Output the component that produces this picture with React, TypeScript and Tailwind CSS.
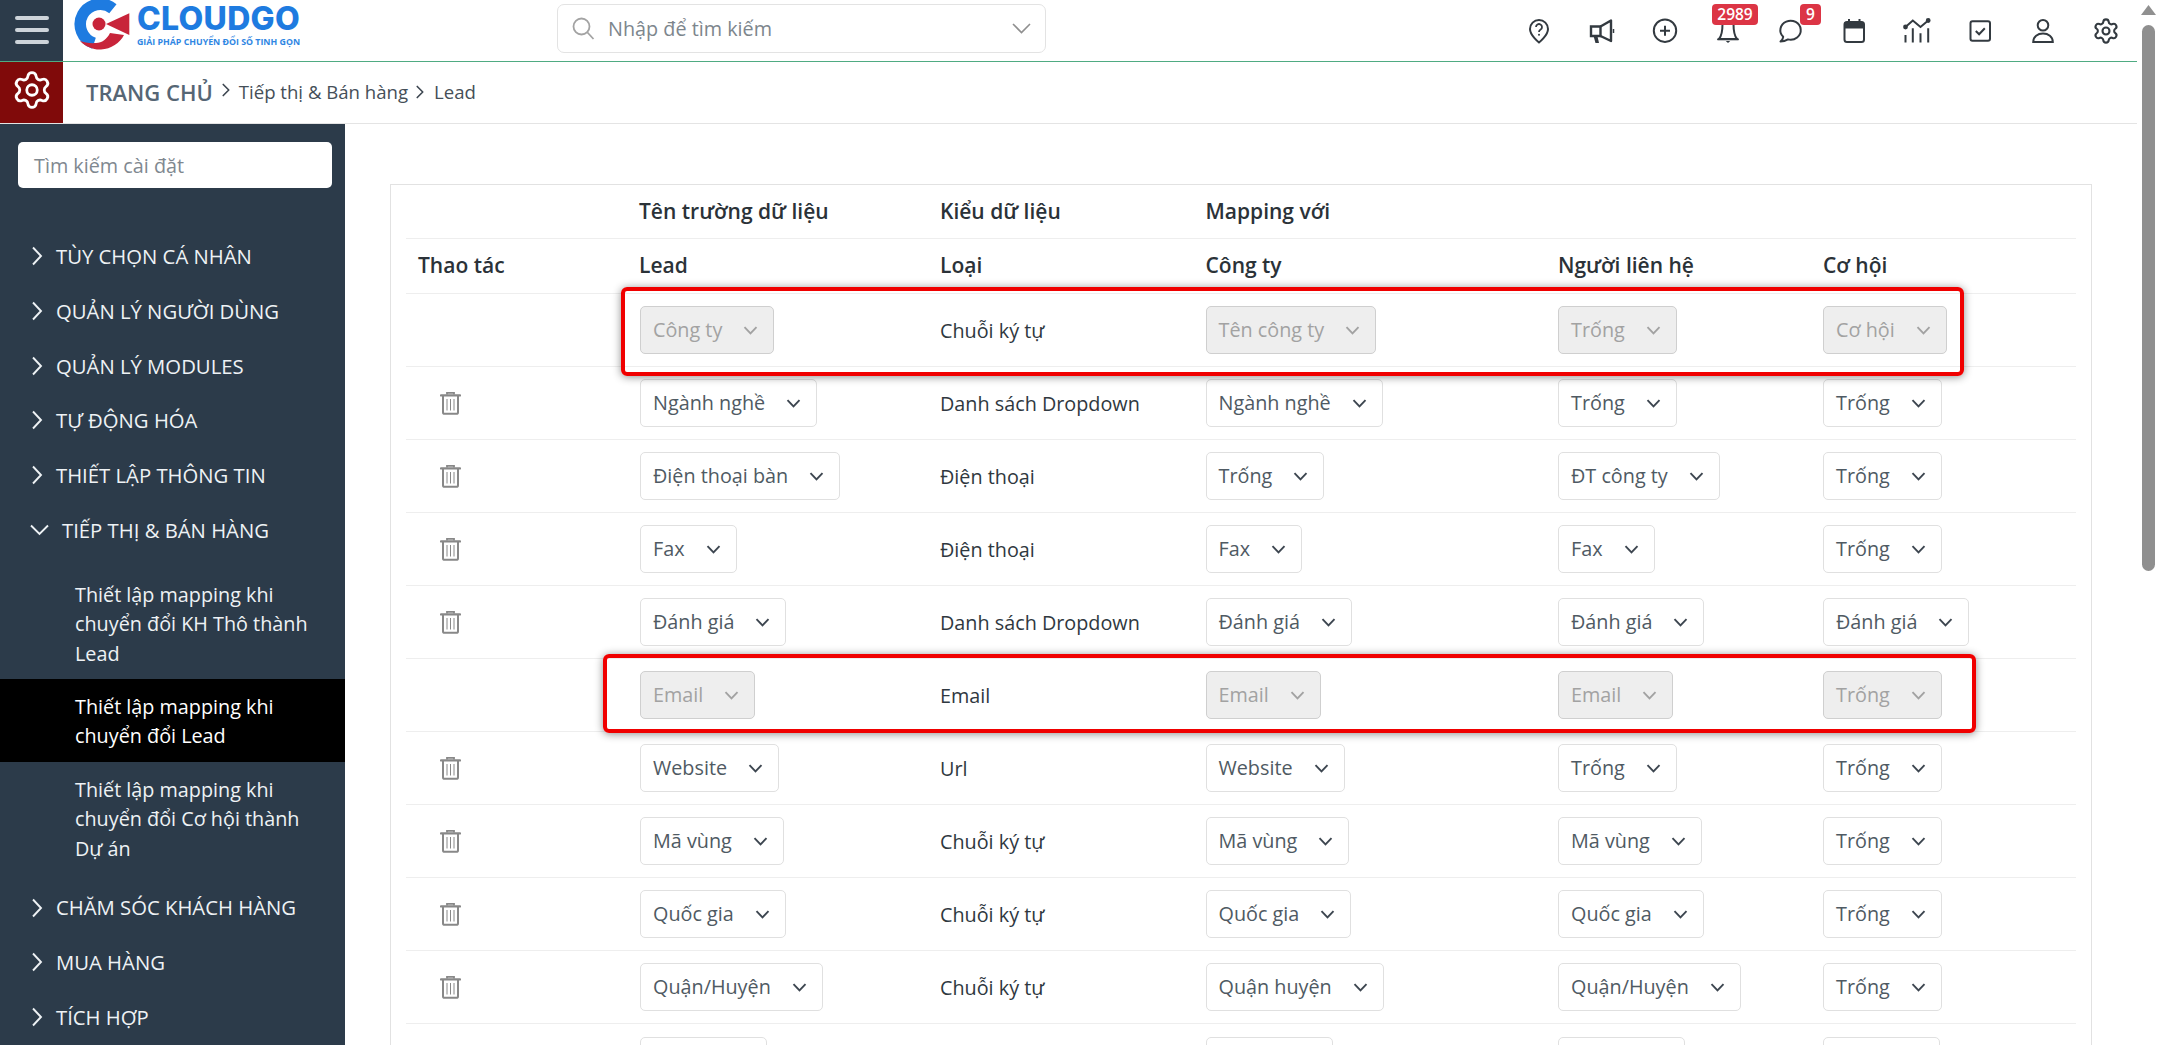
import React from "react";
import { Settings, ChevronRight } from "lucide-react";

function Chevron({ className }: { className?: string }) {
  return (
    <svg width="15" height="9" viewBox="0 0 15 9" fill="none" className={className}>
      <path d="M1.500 1.200 7.500 7.400 13.500 1.200" stroke="currentColor" strokeWidth="1.900" />
    </svg>
  );
}

function Select({ label, disabled, className }: { label?: string; disabled?: boolean; className?: string }) {
  return (
    <div
      className={
        (disabled
          ? "inline-flex h-[48px] items-center rounded-[5px] border border-[#cfcfcf] bg-[#eeeeee] pl-[12px] pr-[15px] align-top text-[#a2a2a2] "
          : "inline-flex h-[48px] items-center rounded-[5px] border border-[#e0e0e0] bg-white pl-[12px] pr-[15px] align-top text-[#4f5a63] ") + (className ?? "")
      }
    >
      {label ? <span className="mb-[1px] whitespace-nowrap">{label}</span> : null}
      {label ? <Chevron className={disabled ? "ml-[21px] text-[#a2a2a2]" : "ml-[21px] text-[#3d4650]"} /> : null}
    </div>
  );
}

function Trash() {
  return (
    <svg width="21" height="24" viewBox="0 0 21 24" fill="none" className="ml-[34px] text-[#888888]">
      <path d="M7 3.500V1.800h7v1.700" stroke="currentColor" strokeWidth="1.800" />
      <path d="M1 4.400h19" stroke="currentColor" strokeWidth="2.200" strokeLinecap="round" />
      <path d="M3 5v16.200c0 1 .6 1.600 1.600 1.600h11.800c1 0 1.600-.6 1.600-1.600V5" stroke="currentColor" strokeWidth="2" />
      <path d="M7 8v11.500M10.500 8v11.500M14 8v11.500" stroke="currentColor" strokeWidth="1" />
    </svg>
  );
}

type Row = { lead: string; type: string; company: string; contact: string; opp: string; locked?: boolean };

const rows: Row[] = [
  { lead: "Công ty", type: "Chuỗi ký tự", company: "Tên công ty", contact: "Trống", opp: "Cơ hội", locked: true },
  { lead: "Ngành nghề", type: "Danh sách Dropdown", company: "Ngành nghề", contact: "Trống", opp: "Trống" },
  { lead: "Điện thoại bàn", type: "Điện thoại", company: "Trống", contact: "ĐT công ty", opp: "Trống" },
  { lead: "Fax", type: "Điện thoại", company: "Fax", contact: "Fax", opp: "Trống" },
  { lead: "Đánh giá", type: "Danh sách Dropdown", company: "Đánh giá", contact: "Đánh giá", opp: "Đánh giá" },
  { lead: "Email", type: "Email", company: "Email", contact: "Email", opp: "Trống", locked: true },
  { lead: "Website", type: "Url", company: "Website", contact: "Trống", opp: "Trống" },
  { lead: "Mã vùng", type: "Chuỗi ký tự", company: "Mã vùng", contact: "Mã vùng", opp: "Trống" },
  { lead: "Quốc gia", type: "Chuỗi ký tự", company: "Quốc gia", contact: "Quốc gia", opp: "Trống" },
  { lead: "Quận/Huyện", type: "Chuỗi ký tự", company: "Quận huyện", contact: "Quận/Huyện", opp: "Trống" },
];

const menuTop = ["TÙY CHỌN CÁ NHÂN", "QUẢN LÝ NGƯỜI DÙNG", "QUẢN LÝ MODULES", "TỰ ĐỘNG HÓA", "THIẾT LẬP THÔNG TIN"];
const menuBottom = ["CHĂM SÓC KHÁCH HÀNG", "MUA HÀNG", "TÍCH HỢP"];

function MenuItem({ label }: { label: string }) {
  return (
    <div className="flex h-[54.7px] items-center pl-[31px] text-[20.3px] text-[#eef2f5]">
      <svg width="12" height="20" viewBox="0 0 12 20" fill="none">
        <path d="M2 1.500 10 10 2 18.500" stroke="currentColor" strokeWidth="1.900" />
      </svg>
      <span className="ml-[13px] whitespace-nowrap">{label}</span>
    </div>
  );
}

function SubItem({ lines, active }: { lines: string[]; active?: boolean }) {
  return (
    <div className={active ? "bg-black pb-[11.5px] pl-[75px] pt-[13px] leading-[29.2px] text-white" : "pb-[11.5px] pl-[75px] pt-[13px] leading-[29.2px] text-[#eef2f5]"}>
      {lines.map((l) => (
        <div key={l} className="whitespace-nowrap">{l}</div>
      ))}
    </div>
  );
}

function TopIcon({ children, badge, badgeClass }: { children: React.ReactNode; badge?: string; badgeClass?: string }) {
  return (
    <div className="relative flex h-[61px] w-[63px] items-center justify-center text-[#333a40]">
      {children}
      {badge ? (
        <span className={"absolute top-[4px] flex h-[21px] items-center justify-center rounded-[4px] bg-[#dc3545] text-[15.5px] font-semibold text-white " + badgeClass}>
          {badge}
        </span>
      ) : null}
    </div>
  );
}

function Ico({ children }: { children: React.ReactNode }) {
  return (
    <svg width="30" height="30" viewBox="0 0 30 30" fill="none" stroke="currentColor" strokeWidth="2">
      {children}
    </svg>
  );
}

export default function App() {
  return (
    <div className="relative flex h-[1045px] w-[2160px] overflow-hidden bg-white font-['Open_Sans',sans-serif] text-[19.8px]">
      <div className="flex w-[2137px] flex-col">
        <header className="flex h-[62px] shrink-0 border-b border-[#4fab82]">
          <div className="flex w-[63px] flex-col items-center justify-start gap-[8.5px] bg-[#2c3b4a] pt-[16px]">
            <span className="h-[3.5px] w-[34px] rounded-full bg-[#ced4da]" />
            <span className="h-[3.5px] w-[34px] rounded-full bg-[#ced4da]" />
            <span className="h-[3.5px] w-[34px] rounded-full bg-[#ced4da]" />
          </div>
          <svg width="56" height="50" viewBox="0 0 56 50" fill="none" className="ml-[11px] shrink-0">
            <path d="M38.900 8.700A20 20 0 1 0 20 43.200" stroke="#1e7be0" strokeWidth="11.500" />
            <path d="M6 41c6 6 14 9 21 8.500 10-.5 19-6.500 23-14.500l-14-2c-3 6-8 10-14 10-6 .5-12-.5-16-2z" fill="#c8243a" />
            <path d="M32 24 55.300 13.300V35z" fill="#c8243a" />
            <circle cx="25" cy="24" r="6.500" fill="#c8243a" />
          </svg>
          <div className="ml-[7px] flex w-[163px] shrink-0 flex-col">
            <span className="mt-[1px] font-['Inter',sans-serif] text-[32px] font-extrabold leading-[36px] tracking-[0.3px] text-[#1e7be0]">CLOUDGO</span>
            <span className="-mt-[1px] whitespace-nowrap text-[8.8px] font-bold leading-[12px] text-[#2f86e3]">GIẢI PHÁP CHUYỂN ĐỔI SỐ TINH GỌN</span>
          </div>
          <div className="ml-[257px] mt-[4px] flex h-[49px] w-[489px] shrink-0 items-center rounded-[7px] border border-[#e3e3e3] pl-[14px] pr-[14px] text-[#7d868d]">
            <svg width="23" height="23" viewBox="0 0 23 23" fill="none" className="text-[#a3a3a3]">
              <circle cx="9.500" cy="9.500" r="8" stroke="currentColor" strokeWidth="1.800" />
              <path d="M15.500 15.500 21.500 22" stroke="currentColor" strokeWidth="1.800" />
            </svg>
            <span className="ml-[13px] mt-[1px]">Nhập để tìm kiếm</span>
            <svg width="19" height="11" viewBox="0 0 19 11" fill="none" className="ml-auto text-[#8f8f8f]">
              <path d="M1 1 9.500 9.500 18 1" stroke="currentColor" strokeWidth="1.600" />
            </svg>
          </div>
          <div className="ml-auto flex">
            <TopIcon>
              <Ico>
                <path d="M15 26.500C15 26.500 6 19.500 6 13a9 9 0 0 1 18 0c0 6.500-9 13.500-9 13.500z" />
                <path d="M12 11a3 3 0 1 1 4.600 2.600c-1 .6-1.600 1.200-1.600 2.400" strokeWidth="1.800" />
                <circle cx="15" cy="18.800" r="1" fill="currentColor" stroke="none" />
              </Ico>
            </TopIcon>
            <TopIcon>
              <Ico>
                <path d="M4 10.500h9.500V20H4z" strokeWidth="2.400" />
                <path d="M13.500 10.500 24 4.500v20.500L13.500 20" strokeWidth="2.400" strokeLinejoin="round" />
                <path d="M26.500 13v4" strokeWidth="1.500" />
                <path d="M6.500 20l2 7h3.500l-1.500-6.500z" fill="currentColor" stroke="none" />
              </Ico>
            </TopIcon>
            <TopIcon>
              <Ico>
                <circle cx="15" cy="14.700" r="11.200" />
                <path d="M15 9.700v10M10 14.700h10" />
              </Ico>
            </TopIcon>
            <TopIcon badge="2989" badgeClass="left-[16px] w-[46px]">
              <Ico>
                <path d="M9.500 8c0 7-1 12-3.500 15h18c-2.500-3-3.500-8-3.500-15" />
                <path d="M4.500 23.300h21" />
                <path d="M12.800 25h4.400L15 27z" fill="currentColor" stroke="none" />
              </Ico>
            </TopIcon>
            <TopIcon badge="9" badgeClass="left-[41px] w-[21px]">
              <Ico>
                <path d="M4.500 25.500c1.500-1.200 2.500-2.800 2.700-4.700A10.200 9.500 0 1 1 12 23.400c-2.400 1.400-5 2.100-7.500 2.100z" strokeLinejoin="round" />
              </Ico>
            </TopIcon>
            <TopIcon>
              <Ico>
                <rect x="5.500" y="6" width="19.500" height="20" rx="2.500" />
                <path d="M5.500 9.500h19.500" strokeWidth="6" />
                <path d="M10 3v2M20.500 3v2" strokeWidth="2" />
              </Ico>
            </TopIcon>
            <TopIcon>
              <Ico>
                <path d="M3.500 19v7.500M10.800 12.300v14.200M18.500 17.300v9.200M26.200 12.300v14.200" />
                <path d="M3.500 11l7.300-6.500 7.700 6.500 7.700-6.500" />
                <circle cx="3.500" cy="11" r="1.400" fill="currentColor" />
                <circle cx="26.200" cy="4.500" r="1.400" fill="currentColor" />
              </Ico>
            </TopIcon>
            <TopIcon>
              <Ico>
                <rect x="5.500" y="5.200" width="19.500" height="19.500" rx="2" />
                <path d="M10.800 15l3.300 3.300 5.700-6" />
              </Ico>
            </TopIcon>
            <TopIcon>
              <Ico>
                <circle cx="15" cy="9.300" r="5.300" />
                <path d="M5.200 26c0-5.500 4.500-8.500 9.800-8.500s9.800 3 9.800 8.500z" />
              </Ico>
            </TopIcon>
            <TopIcon>
              <Settings size={28} strokeWidth={1.8} />
            </TopIcon>
          </div>
        </header>

        <div className="flex h-[62px] shrink-0 items-center border-b border-[#e4e4e4]">
          <div className="flex h-full w-[63px] shrink-0 items-center justify-center bg-[#800a0a] pb-[5px] text-white">
            <Settings size={42} strokeWidth={1.6} />
          </div>
          <span className="ml-[23px] whitespace-nowrap text-[22px] font-semibold text-[#566675]">TRANG CHỦ</span>
          <ChevronRight size={22} strokeWidth={1.8} className="mb-[6px] ml-[2px] text-[#3d4650]" />
          <span className="ml-[2px] mb-[2px] whitespace-nowrap text-[18.6px] text-[#454f58]">Tiếp thị &amp; Bán hàng</span>
          <ChevronRight size={22} strokeWidth={1.8} className="ml-[1px] mb-[2px] text-[#3d4650]" />
          <span className="ml-[3px] mb-[2px] text-[18.6px] text-[#454f58]">Lead</span>
        </div>

        <div className="flex min-h-0 flex-1">
          <aside className="w-[345px] shrink-0 bg-[#2c3b4a] pt-[18px]">
            <div className="mx-[18px] flex h-[46px] w-[314px] items-center rounded-[5px] bg-white pl-[16px] pt-[2px] text-[#7f8890]">Tìm kiếm cài đặt</div>
            <div className="mt-[41px]">
              {menuTop.map((m) => (
                <MenuItem key={m} label={m} />
              ))}
              <div className="flex h-[54.7px] items-center pl-[30px] text-[20.3px] text-[#eef2f5]">
                <svg width="19" height="12" viewBox="0 0 19 12" fill="none">
                  <path d="M1 1.500 9.500 10 18 1.500" stroke="currentColor" strokeWidth="1.900" />
                </svg>
                <span className="ml-[13px] whitespace-nowrap">TIẾP THỊ &amp; BÁN HÀNG</span>
              </div>
              <div className="mb-[6px] mt-[10px]">
                <SubItem lines={["Thiết lập mapping khi", "chuyển đổi KH Thô thành", "Lead"]} />
                <SubItem active lines={["Thiết lập mapping khi", "chuyển đổi Lead"]} />
                <SubItem lines={["Thiết lập mapping khi", "chuyển đổi Cơ hội thành", "Dự án"]} />
              </div>
              {menuBottom.map((m) => (
                <MenuItem key={m} label={m} />
              ))}
            </div>
          </aside>

          <main className="min-w-0 flex-1 pl-[45px] pr-[45px] pt-[60px]">
            <div className="h-[900px] border border-[#e2e2e2] pl-[15px] pr-[15px]">
              <table className="w-[1670px] table-fixed border-separate border-spacing-0 text-left text-[#2f3840]">
                <colgroup>
                  <col className="w-[222px]" />
                  <col className="w-[301px]" />
                  <col className="w-[264.5px]" />
                  <col className="w-[352.5px]" />
                  <col className="w-[265px]" />
                  <col className="w-[265px]" />
                </colgroup>
                <thead className="text-[21px] text-[#2b3238]">
                  <tr className="h-[54px]">
                    <th className="border-b border-[#eeeeee] pl-[12px] font-semibold"></th>
                    <th className="border-b border-[#eeeeee] pl-[11px] font-semibold">Tên trường dữ liệu</th>
                    <th className="border-b border-[#eeeeee] pl-[11px] font-semibold">Kiểu dữ liệu</th>
                    <th className="border-b border-[#eeeeee] pl-[12px] font-semibold">Mapping với</th>
                    <th className="border-b border-[#eeeeee] pl-[12px] font-semibold"></th>
                    <th className="border-b border-[#eeeeee] pl-[12px] font-semibold"></th>
                  </tr>
                  <tr className="h-[55px]">
                    <th className="border-b border-[#eeeeee] pl-[12px] font-semibold">Thao tác</th>
                    <th className="border-b border-[#eeeeee] pl-[11px] font-semibold">Lead</th>
                    <th className="border-b border-[#eeeeee] pl-[11px] font-semibold">Loại</th>
                    <th className="border-b border-[#eeeeee] pl-[12px] font-semibold">Công ty</th>
                    <th className="border-b border-[#eeeeee] pl-[12px] font-semibold">Người liên hệ</th>
                    <th className="border-b border-[#eeeeee] pl-[12px] font-semibold">Cơ hội</th>
                  </tr>
                </thead>
                <tbody>
                  {rows.map((r) => (
                    <tr key={r.lead} className="h-[73px]">
                      <td className="border-b border-[#eeeeee]">{r.locked ? null : <Trash />}</td>
                      <td className="border-b border-[#eeeeee] pl-[12px]"><Select label={r.lead} disabled={r.locked} /></td>
                      <td className="border-b border-[#eeeeee] pl-[11px] pt-[2px]">{r.type}</td>
                      <td className="border-b border-[#eeeeee] pl-[12px]"><Select label={r.company} disabled={r.locked} /></td>
                      <td className="border-b border-[#eeeeee] pl-[12px]"><Select label={r.contact} disabled={r.locked} /></td>
                      <td className="border-b border-[#eeeeee] pl-[12px]"><Select label={r.opp} disabled={r.locked} /></td>
                    </tr>
                  ))}
                  <tr className="h-[73px]">
                    <td></td>
                    <td className="pl-[12px]"><Select className="w-[127px]" /></td>
                    <td></td>
                    <td className="pl-[12px]"><Select className="w-[127px]" /></td>
                    <td className="pl-[12px]"><Select className="w-[127px]" /></td>
                    <td className="pl-[12px]"><Select className="w-[117px]" /></td>
                  </tr>
                </tbody>
              </table>
            </div>
          </main>
        </div>
      </div>

      <div className="flex w-[23px] shrink-0 flex-col items-center pt-[5px]">
        <svg width="15" height="10" viewBox="0 0 15 10" className="text-[#909090]">
          <path d="M7.500 0 15 10H0z" fill="currentColor" />
        </svg>
        <div className="mt-[10px] h-[546px] w-[13px] rounded-[7px] bg-[#8f8f8f]" />
      </div>

      <div className="absolute left-[621px] top-[287px] h-[89px] w-[1343px] rounded-[6px] border-[4px] border-[#f00000] shadow-[0_1px_8px_rgba(0,0,0,0.45)]" />
      <div className="absolute left-[603px] top-[654px] h-[79px] w-[1373px] rounded-[6px] border-[4px] border-[#f00000] shadow-[0_1px_8px_rgba(0,0,0,0.45)]" />
    </div>
  );
}
